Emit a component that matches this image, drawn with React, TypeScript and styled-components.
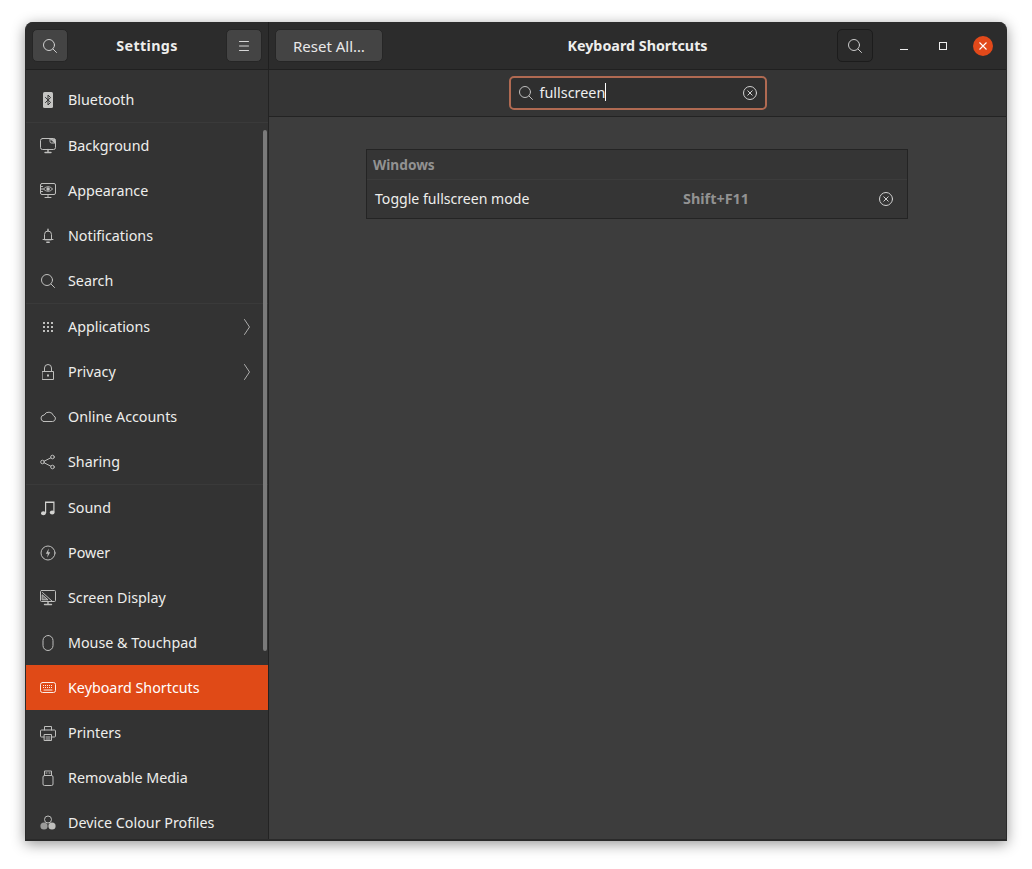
import React from "react";
import styled, { createGlobalStyle } from "styled-components";

const Global = createGlobalStyle`
  html, body { margin: 0; padding: 0; background: #fff; }
  body { font-family: "Noto Sans", "Open Sans", sans-serif; }
`;
const Page = styled.div`
  width: 1032px; height: 869px; padding: 22px 25px 28px; box-sizing: border-box; overflow: hidden;
`;
const Win = styled.div`
  width: 982px; height: 819px; box-sizing: border-box; display: flex; flex-direction: column; overflow: hidden;
  border-radius: 8px 8px 0 0; background: #3d3d3d; color: #eee;
  border: solid #2a2a2a; border-width: 0 1px 2px;
  box-shadow: 0 3px 14px rgba(0,0,0,.42);
`;
const Header = styled.header`
  height: 47px; flex: none; display: flex; background: #2c2c2c; border-bottom: 1px solid #202020; box-sizing: content-box;
`;
const LeftHeader = styled.div`
  width: 243px; flex: none; box-sizing: border-box; display: flex; align-items: center; justify-content: space-between;
  padding: 0 6px; border-right: 1px solid #1f1f1f;
`;
const RightHeader = styled.div`
  flex: 1; display: grid; grid-template-columns: 1fr auto 1fr; align-items: center; padding: 0 13px 0 6px;
`;
const Title = styled.div<{ $shift?: number; $track?: number }>`
  font-size: 14.3px; font-weight: 700; color: #eeeeec; text-align: center; padding-left: ${p => p.$shift ?? 0}px;
  letter-spacing: ${p => p.$track ?? 0}px;
`;
const HBtn = styled.button<{ $w?: number; $dark?: boolean }>`
  width: ${p => p.$w ?? 36}px; height: 33px; padding: 0; display: inline-flex; align-items: center; justify-content: center;
  background: ${p => (p.$dark ? "#2a2a2a" : "#444444")};
  border: 1px solid ${p => (p.$dark ? "#1c1c1c" : "#262626")}; border-radius: 5px; color: #e8e8e8;
  font: 15px "Noto Sans", sans-serif;
`;
const Spaced = styled(HBtn)`
  margin-right: 11px;
`;
const WinControls = styled.div`
  display: flex; align-items: center; justify-content: flex-end;
`;
const CtrlBox = styled.span`
  width: 39.3px; display: inline-flex; justify-content: center; align-items: center; height: 20px;
`;
const CloseBtn = styled.span`
  width: 20px; height: 20px; border-radius: 50%; background: #e2491a; display: inline-flex; align-items: center; justify-content: center; margin-left: 10px;
`;
const Body = styled.div`
  flex: 1; min-height: 0; display: flex;
`;
const Sidebar = styled.nav`
  width: 243px; flex: none; box-sizing: border-box; background: #333333; border-right: 1px solid #232323; position: relative; overflow: hidden; padding-top: 7px;
`;
const Sep = styled.div`
  height: 1px; background: #3a3a3a;
`;
const Row = styled.div<{ $active?: boolean }>`
  height: 45px; display: flex; align-items: center; padding-left: 14px; padding-right: 17px; box-sizing: border-box;
  background: ${p => (p.$active ? "#e04a17" : "transparent")};
  color: ${p => (p.$active ? "#ffffff" : "#eeeeec")}; font-size: 14.3px;
`;
const IconSlot = styled.span`
  width: 16px; height: 16px; margin-right: 12px; flex: none; display: inline-flex;
`;
const RowLabel = styled.span`
  flex: 1; white-space: nowrap;
`;
const Thumb = styled.div`
  position: absolute; right: 1px; top: 60px; width: 4px; height: 521px; border-radius: 3px; background: #7a7a7a;
`;
const Main = styled.main`
  flex: 1; display: flex; flex-direction: column; min-width: 0;
`;
const SearchBar = styled.div`
  height: 46px; flex: none; background: #353535; border-bottom: 1px solid #232323; display: flex; align-items: center; justify-content: center; box-sizing: content-box;
`;
const SearchEntry = styled.div`
  width: 258px; height: 34px; box-sizing: border-box; border: 2px solid #b06a52; border-radius: 5px; background: #2f2f2f; display: flex; align-items: center; padding: 0 7px; color: #eee; font-size: 14.4px;
`;
const Typed = styled.span`
  margin-left: 6px; flex: 1; display: flex; align-items: center; padding-bottom: 2px;
`;
const Caret = styled.i`
  display: inline-block; width: 1px; height: 18px; background: #fff;
`;
const Content = styled.div`
  flex: 1; display: flex; justify-content: center; padding: 32px 1px 0 0; background: #3d3d3d; align-items: flex-start;
`;
const Card = styled.section`
  width: 542px; box-sizing: border-box; border: 1px solid #242424; background: #353535;
`;
const CardHead = styled.div`
  height: 30px; display: flex; align-items: center; padding-left: 6px; font-size: 13.7px; font-weight: 700; color: #929292; border-bottom: 1px solid #3c3c3c; box-sizing: border-box;
`;
const CardRow = styled.div`
  height: 38px; display: grid; grid-template-columns: 308px 1fr auto; align-items: center; padding: 0 13px 0 8px;
`;
const Short = styled.span`
  font-weight: 700; font-size: 14.4px; color: #929292; padding-bottom: 2px;
`;
const CardLabel = styled.span`
  font-size: 14.1px; color: #eeeeec; padding-bottom: 2px;
`;

const S = { fill: "none", stroke: "currentColor", strokeWidth: 1, strokeLinecap: "round", strokeLinejoin: "round" } as const;
const Ico = ({ children, o = 0.75 }: { children: React.ReactNode; o?: number }) => (
  <svg width="16" height="16" viewBox="0 0 16 16" style={{ opacity: o }} {...S}>{children}</svg>
);
const SearchIco = ({ o = 0.85 }: { o?: number }) => (
  <Ico o={o}><circle cx="7" cy="7" r="5.5" /><path d="M11 11l3.5 3.5" /></Ico>
);
const ClearIco = () => (
  <Ico o={0.85}><circle cx="8" cy="8" r="6.5" /><path d="M5.8 5.8l4.4 4.4M10.2 5.8l-4.4 4.4" /></Ico>
);
const Chevron = () => (
  <svg width="8" height="16" viewBox="0 0 8 16" style={{ opacity: 0.65 }} {...S}><path d="M1.5 .5l5 7.5-5 7.5" /></svg>
);

const icons: Record<string, React.ReactNode> = {
  Bluetooth: (
    <svg width="16" height="16" viewBox="0 0 16 16" style={{ opacity: 0.78 }}>
      <rect x="3" y="0" width="10" height="16" rx="1.5" fill="currentColor" />
      <path d="M5.2 5.2L10.6 10.4 8 13V3l2.6 2.6-5.4 5.2" fill="none" stroke="#333" strokeWidth="1" />
    </svg>
  ),
  Background: <Ico><rect x="0.5" y="0.5" width="15" height="11" rx="2" /><path d="M10 0.5v3a1.5 1.5 0 0 0 1.5 1.5h4" /><path d="M10.5 1l4.5 4V2z" fill="currentColor" /><path d="M8 11.5v2.5M5 14.5h6" strokeWidth="1.4" /></Ico>,
  Appearance: <Ico><rect x="0.5" y="0.5" width="15" height="11" rx="1.5" /><path d="M3.5 6c2-3 7-3 9 0-2 3-7 3-9 0z" /><circle cx="8" cy="6" r="1.2" fill="currentColor" /><path d="M.5 3.5h2M.5 6h2M.5 8.5h2M8 11.5v2.5M5 14.5h6" /></Ico>,
  Notifications: <Ico><path d="M4.5 11.5V6.5a3.5 3.5 0 0 1 7 0v5z" /><path d="M3 11.5h10" /><path d="M6.8 14.2h2.4M8 1.2V3" strokeWidth="1.4" /></Ico>,
  Search: <Ico><circle cx="7" cy="7" r="5.5" /><path d="M11 11l3.5 3.5" /></Ico>,
  Applications: <svg width="16" height="16" viewBox="0 0 16 16" fill="currentColor" style={{ opacity: 0.75 }}>{[3, 7, 11].flatMap(y => [3, 7, 11].map(x => <rect key={x + "-" + y} x={x} y={y} width="2" height="2" />))}</svg>,
  Privacy: <Ico><rect x="2.5" y="7.5" width="11" height="8" /><path d="M4.5 7.5V4a3.5 3.5 0 0 1 7 0v3.5" /><rect x="7" y="10.5" width="2" height="2" fill="currentColor" stroke="none" /></Ico>,
  "Online Accounts": <Ico><path d="M3.5 12.5h9a3 3 0 0 0 1-5.8A5 5 0 0 0 4.2 6 3.3 3.3 0 0 0 3.5 12.5z" /></Ico>,
  Sharing: <Ico><circle cx="2.5" cy="8" r="1.8" /><circle cx="12.5" cy="3" r="1.8" /><circle cx="12.5" cy="13" r="1.8" /><path d="M4.2 7.2l6.6-3.4M4.2 8.8l6.6 3.4" /></Ico>,
  Sound: <svg width="16" height="16" viewBox="0 0 16 16" style={{ opacity: 0.85 }} fill="currentColor"><path d="M5 1.5h9.5v1.6H6.2v10H5zM13.3 1.5h1.2v10.5h-1.2z" /><ellipse cx="3.4" cy="13.2" rx="2.4" ry="2" /><ellipse cx="12.2" cy="12.4" rx="2.4" ry="2" /></svg>,
  Power: <Ico><circle cx="8" cy="8" r="7" /><path d="M8.8 3.5L5.8 8.8h2l-.6 3.7 3-5.3h-2z" fill="currentColor" stroke="none" /></Ico>,
  "Screen Display": <Ico><rect x="0.5" y="0.5" width="15" height="11" rx="1" /><path d="M2.5 2.5l10 9" /><path d="M2.5 5l5.5 4.8H2.5z" fill="currentColor" fillOpacity="0.45" /><path d="M8 11.5v2.5M4.5 14.5h7" strokeWidth="1.4" /></Ico>,
  "Mouse & Touchpad": <Ico><rect x="3" y="0.5" width="10" height="15" rx="5" /></Ico>,
  "Keyboard Shortcuts": <svg width="16" height="16" viewBox="0 0 16 16" style={{ opacity: 0.9 }} {...S}><rect x="0.5" y="2.5" width="15" height="10" rx="2" /><path d="M3 5.5h10M3 7.5h10" strokeDasharray="1 1" strokeLinecap="butt" /><path d="M4 10h8" /></svg>,
  Printers: <Ico><path d="M4.5 5V1.5h7V5" /><path d="M4 12H1.5A1 1 0 0 1 .5 11V6a1 1 0 0 1 1-1h13a1 1 0 0 1 1 1v5a1 1 0 0 1-1 1H12" /><rect x="4.5" y="9.5" width="7" height="6" /><path d="M6 12h4M6 14h4" /></Ico>,
  "Removable Media": <Ico><rect x="3" y="5.5" width="10" height="10" rx="1.5" /><path d="M4.5 5.5V1h7v4.5M6 3h1M9 3h1" /></Ico>,
  "Device Colour Profiles": <svg width="16" height="16" viewBox="0 0 16 16" style={{ opacity: 0.75 }}><circle cx="8" cy="4.5" r="3.5" fill="none" stroke="currentColor" /><circle cx="4" cy="11" r="3.6" fill="currentColor" opacity="0.75" /><circle cx="12" cy="11" r="3.6" fill="currentColor" /></svg>,
};

const groups: [string, boolean?][][] = [
  [["Bluetooth"]],
  [["Background"], ["Appearance"], ["Notifications"], ["Search"]],
  [["Applications", true], ["Privacy", true], ["Online Accounts"], ["Sharing"]],
  [["Sound"], ["Power"], ["Screen Display"], ["Mouse & Touchpad"], ["Keyboard Shortcuts"], ["Printers"], ["Removable Media"], ["Device Colour Profiles"]],
];

export default function App() {
  return (
    <Page>
      <Global />
      <Win>
        <Header>
          <LeftHeader>
            <HBtn aria-label="Search"><SearchIco /></HBtn>
            <Title $track={0.35}>Settings</Title>
            <HBtn aria-label="Menu">
              <svg width="16" height="16" viewBox="0 0 16 16" {...S} style={{ opacity: 0.9 }}><path d="M3.5 3.5h9M3.5 8h9M3.5 12.5h9" /></svg>
            </HBtn>
          </LeftHeader>
          <RightHeader>
            <div><HBtn $w={108}>Reset All…</HBtn></div>
            <Title $shift={7}>Keyboard Shortcuts</Title>
            <WinControls>
              <Spaced $dark aria-label="Search"><SearchIco /></Spaced>
              <CtrlBox><svg width="10" height="10" viewBox="0 0 10 10"><path d="M1 8.5h8" stroke="#eee" /></svg></CtrlBox>
              <CtrlBox><svg width="10" height="10" viewBox="0 0 10 10"><rect x="1.5" y="1.5" width="7" height="7" fill="none" stroke="#eee" /></svg></CtrlBox>
              <CloseBtn><svg width="10" height="10" viewBox="0 0 10 10"><path d="M1.5 1.5l7 7M8.5 1.5l-7 7" stroke="#fff" strokeWidth="1.1" /></svg></CloseBtn>
            </WinControls>
          </RightHeader>
        </Header>
        <Body>
          <Sidebar>
            {groups.map((g, i) => (
              <React.Fragment key={i}>
                {i > 0 && <Sep />}
                {g.map(([name, more]) => (
                  <Row key={name} $active={name === "Keyboard Shortcuts"}>
                    <IconSlot>{icons[name]}</IconSlot>
                    <RowLabel>{name}</RowLabel>
                    {more && <Chevron />}
                  </Row>
                ))}
              </React.Fragment>
            ))}
            <Thumb />
          </Sidebar>
          <Main>
            <SearchBar>
              <SearchEntry>
                <SearchIco o={0.75} />
                <Typed>fullscreen<Caret /></Typed>
                <ClearIco />
              </SearchEntry>
            </SearchBar>
            <Content>
              <Card>
                <CardHead>Windows</CardHead>
                <CardRow>
                  <CardLabel>Toggle fullscreen mode</CardLabel>
                  <Short>Shift+F11</Short>
                  <ClearIco />
                </CardRow>
              </Card>
            </Content>
          </Main>
        </Body>
      </Win>
    </Page>
  );
}
